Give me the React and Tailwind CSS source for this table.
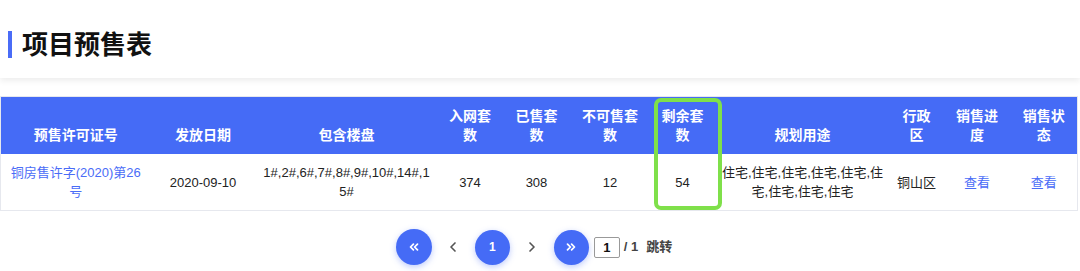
import { ChevronLeft, ChevronRight, ChevronsLeft, ChevronsRight } from 'lucide-react';

const font = "font-['Liberation_Sans','Noto_Sans_CJK_SC',sans-serif]";

const columns = [
  { title: '预售许可证号', w: 'w-[150px]' },
  { title: '发放日期', w: 'w-[105px]' },
  { title: '包含楼盘', w: 'w-[182px]' },
  { title: '入网套数', w: 'w-[65px]' },
  { title: '已售套数', w: 'w-[68px]' },
  { title: '不可售套数', w: 'w-[79px]' },
  { title: '剩余套数', w: 'w-[66px]' },
  { title: '规划用途', w: 'w-[174px]' },
  { title: '行政区', w: 'w-[54px]' },
  { title: '销售进度', w: 'w-[67px]' },
  { title: '销售状态', w: 'w-[67px]' },
];

function App() {
  const td = 'px-[7px] py-[9px] text-center align-middle';

  return (
    <div className={`${font} bg-white w-[1080px] h-[271px] overflow-hidden`}>
      {/* Title bar */}
      <div className="h-[78px] pt-[11px] pl-[8px] flex items-center bg-white shadow-[0_3px_6px_rgba(0,0,0,0.07)]">
        <span className="w-[4px] h-[27px] bg-[#4a6cf7]" />
        <h1 className="ml-[10px] text-[26px] font-bold text-[#111] leading-none">项目预售表</h1>
      </div>

      {/* Table */}
      <div className="relative mt-[18px] w-[1077px]">
        <table className="table-fixed w-[1077px] border-collapse border border-[#e6e8ee] text-[13px] leading-[19px]">
          <colgroup>
            {columns.map((c) => (
              <col key={c.title} className={c.w} />
            ))}
          </colgroup>
          <thead>
            <tr className="bg-[#456bf6]">
              {columns.map((c) => (
                <th key={c.title} className="px-[7px] pt-[10px] pb-[9px] align-bottom text-center text-[14px] font-bold text-white">
                  {c.title}
                </th>
              ))}
            </tr>
          </thead>
          <tbody className="text-[#222]">
            <tr>
              <td className={`${td} text-[#4a6cf7]`}>铜房售许字(2020)第26号</td>
              <td className={td}>2020-09-10</td>
              <td className={td}>
                1#,2#,6#,7#,8#,9#,10#,14#,1
                <br />
                5#
              </td>
              <td className={td}>374</td>
              <td className={td}>308</td>
              <td className={td}>12</td>
              <td className={td}>54</td>
              <td className="px-[6px] py-[9px] text-center align-middle">住宅,住宅,住宅,住宅,住宅,住宅,住宅,住宅,住宅</td>
              <td className={td}>铜山区</td>
              <td className={`${td} text-[#4a6cf7]`}>查看</td>
              <td className={`${td} text-[#4a6cf7]`}>查看</td>
            </tr>
          </tbody>
        </table>
        {/* highlight annotation */}
        <div className="absolute left-[654px] top-[2px] w-[68px] h-[112px] border-[4px] border-[#7fe04a] rounded-[7px]" />
      </div>

      {/* Pagination */}
      <div className="mt-[18px] w-[1077px] pr-[9px] flex items-center justify-center text-[13px]">
        <button className="w-[36px] h-[36px] rounded-full bg-[#456bf6] text-white flex items-center justify-center shadow-[0_2px_6px_rgba(69,107,246,0.35)]">
          <ChevronsLeft size={14} strokeWidth={3} />
        </button>
        <span className="w-[43px] flex justify-center text-[#555]">
          <ChevronLeft size={16} strokeWidth={2.5} />
        </span>
        <button className="w-[35px] h-[35px] rounded-full bg-[#456bf6] text-white font-bold text-[12px] flex items-center justify-center shadow-[0_2px_6px_rgba(69,107,246,0.35)]">
          1
        </button>
        <span className="w-[44px] flex justify-center text-[#555]">
          <ChevronRight size={16} strokeWidth={2.5} />
        </span>
        <button className="w-[35px] h-[35px] rounded-full bg-[#456bf6] text-white flex items-center justify-center shadow-[0_2px_6px_rgba(69,107,246,0.35)]">
          <ChevronsRight size={14} strokeWidth={3} />
        </button>
        <input
          defaultValue="1"
          className="ml-[5px] w-[26px] h-[21px] border border-[#999] rounded-[2px] text-center font-bold text-[13px] text-[#111] outline-none"
        />
        <span className="ml-[4px] font-bold text-[#444]">/ 1</span>
        <span className="ml-[8px] font-bold text-[#444]">跳转</span>
      </div>
    </div>
  );
}

export default App;
